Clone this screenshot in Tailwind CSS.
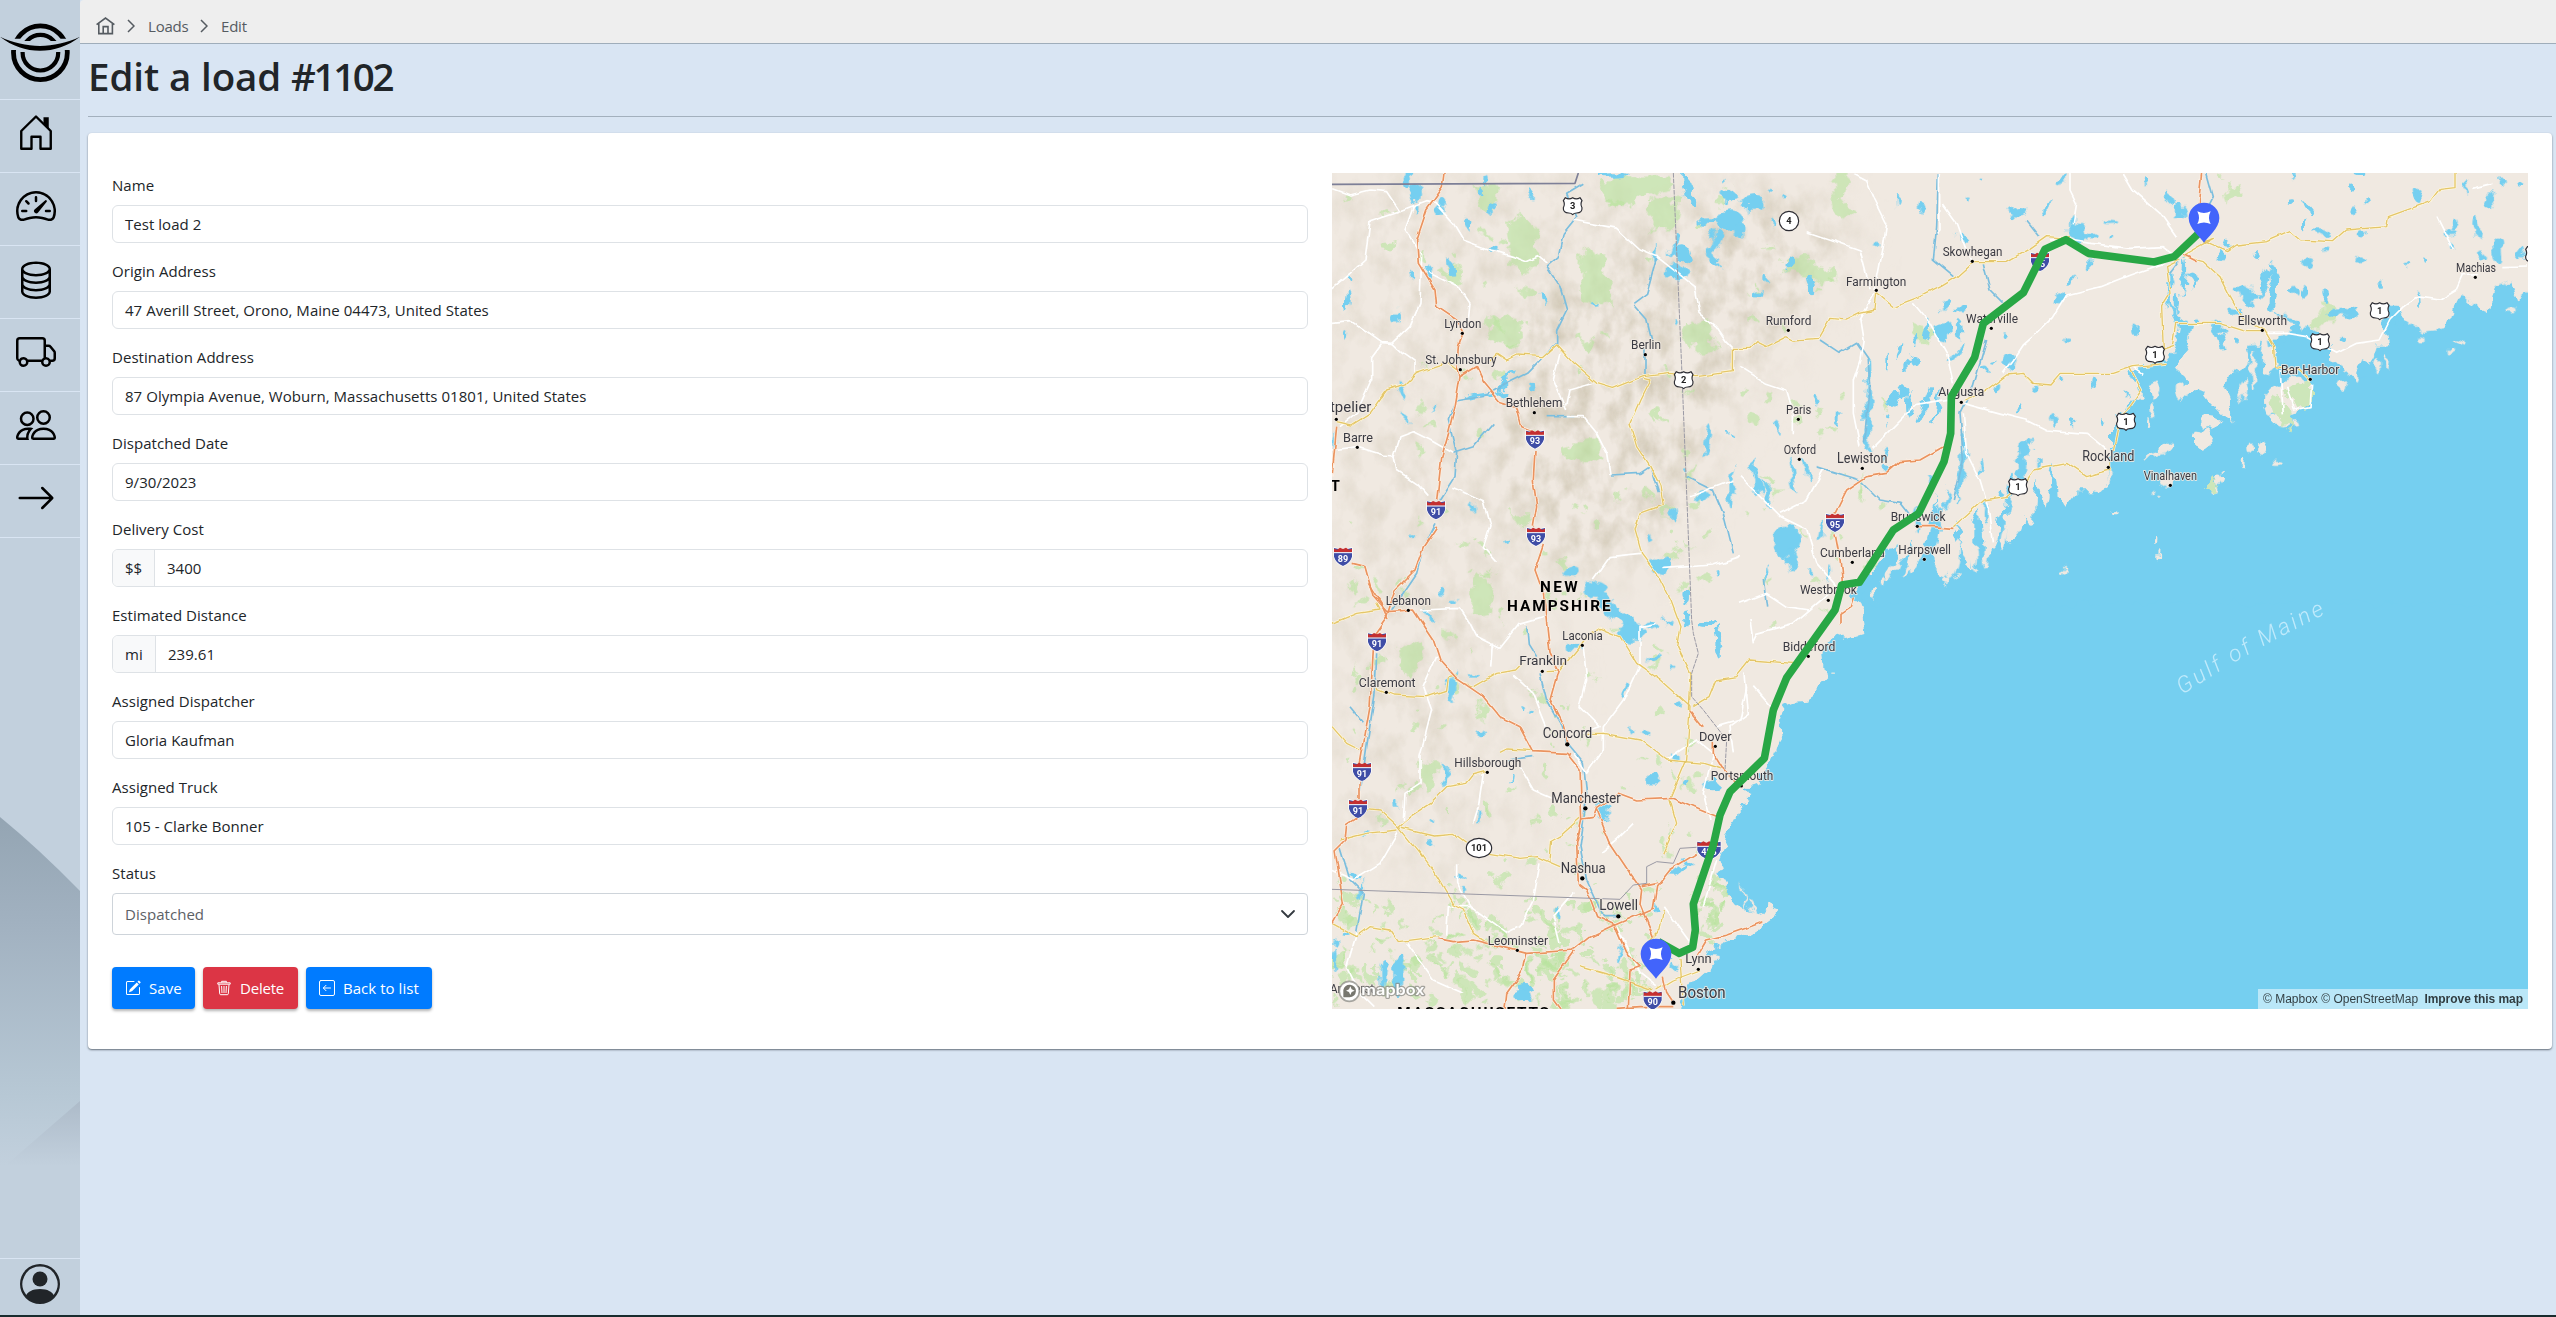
<!DOCTYPE html>
<html lang="en">
<head>
<meta charset="utf-8">
<title>Edit a load #1102</title>
<script src="https://cdn.jsdelivr.net/npm/@tailwindcss/browser@4"></script>
</head>
<body class="flex flex-col w-[2556px] h-[1317px] overflow-hidden bg-[#d9e5f3] font-['Open_Sans','Noto_Sans',sans-serif] text-[#212529]">
<div class="flex flex-1 min-h-0">

<!-- Sidebar -->
<aside class="relative w-20 shrink-0 flex flex-col bg-[#c2d0dd]">
  <svg class="absolute inset-0" width="80" height="1315" viewBox="0 0 80 1315">
    <defs>
      <linearGradient id="m1" x1="0" y1="817" x2="0" y2="1166" gradientUnits="userSpaceOnUse"><stop offset="0" stop-color="#94a5b3"/><stop offset=".3" stop-color="#a1b1c0"/><stop offset=".8" stop-color="#b7c8d5"/><stop offset="1" stop-color="#c2d0dd"/></linearGradient>
      <linearGradient id="m2" x1="0" y1="1101" x2="0" y2="1166" gradientUnits="userSpaceOnUse"><stop offset="0" stop-color="#adbbc9"/><stop offset="1" stop-color="#c2d0dd"/></linearGradient>
    </defs>
    <path d="M0 817Q38 848 80 891V1166H0z" fill="url(#m1)"/>
    <path d="M80 1101L5 1166H80z" fill="url(#m2)"/>
  </svg>
  <div class="relative h-[100px] border-b border-[#d9e5f3]">
    <svg width="80" height="99" viewBox="0 0 80 99" fill="none" stroke="#000">
      <defs>
        <clipPath id="a"><path d="M0 0H80V38.7H0z"/></clipPath><clipPath id="b"><path d="M0 0H80V41H0z"/></clipPath>
        <clipPath id="c"><path d="M0 50H80V99H0z"/></clipPath><clipPath id="d"><path d="M0 52H80V99H0z"/></clipPath>
      </defs>
      <circle cx="40.4" cy="52.7" r="26.8" stroke-width="4.8" clip-path="url(#a)"/>
      <circle cx="40.4" cy="52.7" r="17.8" stroke-width="4.2" clip-path="url(#b)"/>
      <circle cx="40.4" cy="52.7" r="26.9" stroke-width="4.8" clip-path="url(#c)"/>
      <circle cx="40.4" cy="52.7" r="17.8" stroke-width="4.2" clip-path="url(#d)"/>
      <path d="M0 36.8C26 49 54 49 80 36.8C56 55.5 24 55.5 0 36.8z" fill="#000" stroke="none"/>
    </svg>
  </div>
  <nav class="relative flex flex-col">
    <a class="h-[73px] border-b border-[#d9e5f3] pl-4 pt-[13px]"><svg class="size-10" viewBox="0 0 16 16"><path d="M2.1 14.3V7.2L8 1.400l5.900 5.800v7.100H9.800V9.500H6.200v4.800z" fill="none" stroke="#000" stroke-width=".95" stroke-linejoin="round"/><path d="M11 1.700h2.100v5L11 4.600z"/></svg></a>
    <a class="h-[73px] border-b border-[#d9e5f3] pl-4 pt-[12.500px]"><svg class="size-10" viewBox="0 0 16 16"><path d="M8 4a.5.5 0 0 1 .5.5V6a.5.5 0 0 1-1 0V4.5A.5.5 0 0 1 8 4zM3.732 5.732a.5.5 0 0 1 .707 0l.915.914a.5.5 0 1 1-.708.708l-.914-.915a.5.5 0 0 1 0-.707zM2 10a.5.5 0 0 1 .5-.5h1.586a.5.5 0 0 1 0 1H2.5A.5.5 0 0 1 2 10zm9.5 0a.5.5 0 0 1 .5-.5h1.5a.5.5 0 0 1 0 1H12a.5.5 0 0 1-.5-.5zm.754-4.246a.389.389 0 0 0-.527-.02L7.547 9.31a.91.91 0 1 0 1.302 1.258l3.434-4.297a.389.389 0 0 0-.029-.518z"/><path fill-rule="evenodd" d="M0 10a8 8 0 1 1 15.547 2.661c-.442 1.253-1.845 1.602-2.932 1.25C11.309 13.488 9.475 13 8 13c-1.474 0-3.31.488-4.615.911-1.087.352-2.49.003-2.932-1.25A7.988 7.988 0 0 1 0 10zm8-7a7 7 0 0 0-6.603 9.329c.203.575.923.876 1.68.63C4.397 12.533 6.358 12 8 12s3.604.532 4.923.96c.757.245 1.477-.056 1.68-.631A7 7 0 0 0 8 3z"/></svg></a>
    <a class="h-[73px] border-b border-[#d9e5f3] pl-4 pt-[13px]"><svg class="size-10" viewBox="0 0 16 16"><path d="M4.318 2.687C5.234 2.271 6.536 2 8 2s2.766.27 3.682.687C12.644 3.125 13 3.627 13 4c0 .374-.356.875-1.318 1.313C10.766 5.729 9.464 6 8 6s-2.766-.27-3.682-.687C3.356 4.875 3 4.373 3 4c0-.374.356-.875 1.318-1.313ZM13 5.698V7c0 .374-.356.875-1.318 1.313C10.766 8.729 9.464 9 8 9s-2.766-.27-3.682-.687C3.356 7.875 3 7.373 3 7V5.698c.271.202.58.378.904.525C4.978 6.711 6.427 7 8 7s3.022-.289 4.096-.777A4.92 4.92 0 0 0 13 5.698ZM14 4c0-1.007-.875-1.755-1.904-2.223C11.022 1.289 9.573 1 8 1s-3.022.289-4.096.777C2.875 2.245 2 2.993 2 4v9c0 1.007.875 1.755 1.904 2.223C4.978 15.71 6.427 16 8 16s3.022-.289 4.096-.777C13.125 14.755 14 14.007 14 13V4Zm-1 4.698V10c0 .374-.356.875-1.318 1.313C10.766 11.729 9.464 12 8 12s-2.766-.27-3.682-.687C3.356 10.875 3 10.373 3 10V8.698c.271.202.58.378.904.525C4.978 9.71 6.427 10 8 10s3.022-.289 4.096-.777A4.92 4.92 0 0 0 13 8.698Zm0 3V13c0 .374-.356.875-1.318 1.313C10.766 14.729 9.464 15 8 15s-2.766-.27-3.682-.687C3.356 13.875 3 13.373 3 13v-1.302c.271.202.58.378.904.525C4.978 12.71 6.427 13 8 13s3.022-.289 4.096-.777c.324-.147.633-.323.904-.525Z"/></svg></a>
    <a class="h-[73px] border-b border-[#d9e5f3] pl-4 pt-[13px]"><svg class="size-10" viewBox="0 0 16 16"><path d="M0 3.5A1.5 1.5 0 0 1 1.5 2h9A1.5 1.5 0 0 1 12 3.5V5h1.02a1.5 1.5 0 0 1 1.17.563l1.481 1.85a1.5 1.5 0 0 1 .329.938V10.5a1.5 1.5 0 0 1-1.5 1.5H14a2 2 0 1 1-4 0H5a2 2 0 1 1-3.998-.085A1.5 1.5 0 0 1 0 10.5v-7zm1.294 7.456A1.999 1.999 0 0 1 4.732 11h5.536a2.01 2.01 0 0 1 .732-.732V3.5a.5.5 0 0 0-.5-.5h-9a.5.5 0 0 0-.5.5v7a.5.5 0 0 0 .294.456zM12 10a2 2 0 0 1 1.732 1h.768a.5.5 0 0 0 .5-.5V8.35a.5.5 0 0 0-.11-.312l-1.48-1.85A.5.5 0 0 0 13.02 6H12v4zm-9 1a1 1 0 1 0 0 2 1 1 0 0 0 0-2zm9 0a1 1 0 1 0 0 2 1 1 0 0 0 0-2z"/></svg></a>
    <a class="h-[73px] border-b border-[#d9e5f3] pl-4 pt-[12.500px]"><svg class="size-10" viewBox="0 0 16 16"><path d="M15 14s1 0 1-1-1-4-5-4-5 3-5 4 1 1 1 1h8zm-7.978-1A.261.261 0 0 1 7 12.996c.001-.264.167-1.03.76-1.72C8.312 10.629 9.282 10 11 10c1.717 0 2.687.63 3.24 1.276.593.69.758 1.457.76 1.72l-.008.002a.274.274 0 0 1-.014.002H7.022zM11 7a2 2 0 1 0 0-4 2 2 0 0 0 0 4zm3-2a3 3 0 1 1-6 0 3 3 0 0 1 6 0zM6.936 9.28a5.88 5.88 0 0 0-1.23-.247A7.35 7.35 0 0 0 5 9c-4 0-5 3-5 4 0 .667.333 1 1 1h4.216A2.238 2.238 0 0 1 5 13c0-1.01.377-2.042 1.09-2.904.243-.294.526-.569.846-.816zM4.92 10A5.493 5.493 0 0 0 4 13H1c0-.26.164-1.03.76-1.724.545-.636 1.492-1.256 3.16-1.275zM1.5 5.5a3 3 0 1 1 6 0 3 3 0 0 1-6 0zm3-2a2 2 0 1 0 0 4 2 2 0 0 0 0-4z"/></svg></a>
    <a class="h-[73px] border-b border-[#d9e5f3] pl-4 pt-[12.500px]"><svg class="size-10" viewBox="0 0 16 16"><path fill-rule="evenodd" d="M1 8a.5.5 0 0 1 .5-.5h11.793l-3.147-3.146a.5.5 0 0 1 .708-.708l4 4a.5.5 0 0 1 0 .708l-4 4a.5.5 0 0 1-.708-.708L13.293 8.5H1.5A.5.5 0 0 1 1 8z"/></svg></a>
  </nav>
  <div class="relative mt-auto h-[57px] border-t border-[#d9e5f3] pt-[5px] flex justify-center">
    <svg class="size-10" viewBox="0 0 16 16" fill="#212529"><path d="M11 6a3 3 0 1 1-6 0 3 3 0 0 1 6 0z"/><path fill-rule="evenodd" d="M0 8a8 8 0 1 1 16 0A8 8 0 0 1 0 8zm8-7a7 7 0 0 0-5.468 11.37C3.242 11.226 4.805 10 8 10s4.757 1.225 5.468 2.37A7 7 0 0 0 8 1z"/></svg>
  </div>
</aside>

<main class="flex-1 min-w-0 flex flex-col">
  <!-- Breadcrumb -->
  <div class="h-[44px] bg-[#eee] border-b border-[#9fadba] rounded-tl-sm pl-4 pt-[9px] flex items-center text-[15px] tracking-[-0.2px] text-[#555b61]">
    <svg class="w-[19px] h-[18px]" viewBox="0 0 19 18" fill="none" stroke="#555b61" stroke-width="1.6"><path d="M.6 7.6L9.5 1l8.9 6.6M2.8 6.6v10h13.6v-10M7.2 16.5V9.6h4.8v6.9"/></svg>
    <svg class="ml-3 w-2 h-[14px]" viewBox="0 0 8 14" fill="none" stroke="#555b61" stroke-width="1.5"><path d="M1 1l6 6-6 6"/></svg>
    <span class="ml-[13px] w-[52px]">Loads</span>
    <svg class="w-2 h-[14px]" viewBox="0 0 8 14" fill="none" stroke="#555b61" stroke-width="1.5"><path d="M1 1l6 6-6 6"/></svg>
    <span class="ml-[13px]">Edit</span>
  </div>
  <!-- Title -->
  <h1 class="ml-2 h-[73px] border-b border-[#a3b0bd] mr-1 pt-[2px] text-[38.5px] leading-[60px] font-semibold tracking-[-0.1px]">Edit a load <span class="tracking-[-2.4px]">#1102</span></h1>

  <!-- Card -->
  <section class="ml-2 mr-1 mt-4 h-[916px] bg-white rounded px-6 pt-10 flex gap-6 shadow-[0_1px_2px_rgba(50,60,70,.7)]">
    <form class="w-[1196px] text-[15px] tracking-[0.04px]">
      <div id="fields"></div>
      <label class="block h-6 leading-6 mt-4">Status</label>
      <div class="mt-2 h-[42px] border border-[#ced4da] rounded flex items-center justify-between pl-3 pr-[11px] text-[#5c6166]">
        <span>Dispatched</span>
        <svg class="w-4 h-4" viewBox="0 0 16 16" fill="none" stroke="#343a40" stroke-width="1.800" stroke-linecap="round" stroke-linejoin="round"><path d="M2 5l6 6 6-6"/></svg>
      </div>
      <div class="mt-8 flex gap-2 text-white">
        <a class="h-[42px] w-[83px] px-[13px] rounded bg-[#007bff] flex items-center gap-2 shadow-[0_2px_3px_rgba(0,0,0,.3)]"><svg class="size-4 shrink-0" viewBox="0 0 16 16" fill="currentColor"><path d="M15.502 1.94a.5.5 0 0 1 0 .706L14.459 3.69l-2-2L13.502.646a.5.5 0 0 1 .707 0l1.293 1.293zm-1.75 2.456-2-2L4.939 9.21a.5.5 0 0 0-.121.196l-.805 2.414a.25.25 0 0 0 .316.316l2.414-.805a.5.5 0 0 0 .196-.12l6.813-6.814z"/><path fill-rule="evenodd" d="M1 13.5A1.500 1.500 0 0 0 2.500 15h11a1.500 1.500 0 0 0 1.500-1.500v-6a.5.5 0 0 0-1 0v6a.5.5 0 0 1-.5.5h-11a.5.5 0 0 1-.5-.5v-11a.5.5 0 0 1 .5-.5H9a.5.5 0 0 0 0-1H2.500A1.500 1.500 0 0 0 1 2.500v11z"/></svg>Save</a>
        <a class="h-[42px] w-[95px] px-[13px] rounded bg-[#dc3545] flex items-center gap-2 shadow-[0_2px_3px_rgba(0,0,0,.3)]"><svg class="size-4 shrink-0" viewBox="0 0 16 16" fill="none" stroke="currentColor"><path d="M1.800 2.800h12.400v1.400H1.800zM5.600 2.500V1.300h4.800v1.200M3 4.500l.7 9.300q.1.900 1 .9h6.600q.9 0 1-.9L13 4.500M5.600 6l.4 7M8 6v7M10.400 6l-.4 7"/></svg><span class="tracking-[-0.2px]">Delete</span></a>
        <a class="h-[42px] w-[126px] px-[13px] rounded bg-[#007bff] flex items-center gap-2 shadow-[0_2px_3px_rgba(0,0,0,.3)] whitespace-nowrap"><svg class="size-4 shrink-0" viewBox="0 0 16 16" fill="none" stroke="currentColor" stroke-linecap="round" stroke-linejoin="round"><rect x=".5" y=".5" width="15" height="15" rx="1.500"/><path d="M11.500 8h-7M7 5.300L4.300 8 7 10.700"/></svg>Back to list</a>
      </div>
    </form>

    <!-- Map -->
    <div class="relative w-[1196px] h-[836px] overflow-hidden bg-[#f0e9e1]">
      <svg id="map" class="block" width="1196" height="836" viewBox="36 39 3588 2508" fill="none" stroke-linejoin="round">
        <defs>
          <filter id="rough" x="0" y="0" width="3700" height="2600" filterUnits="userSpaceOnUse" color-interpolation-filters="sRGB"><feTurbulence type="fractalNoise" baseFrequency=".022" numOctaves="3" seed="4"/><feDisplacementMap in="SourceGraphic" scale="48" xChannelSelector="R" yChannelSelector="G"/></filter>
          <filter id="park" x="0" y="0" width="3700" height="2600" filterUnits="userSpaceOnUse" color-interpolation-filters="sRGB"><feTurbulence type="fractalNoise" baseFrequency=".018" numOctaves="4" seed="9"/><feDisplacementMap in="SourceGraphic" scale="75" xChannelSelector="R" yChannelSelector="G"/></filter>
          <filter id="wobble" x="0" y="0" width="3700" height="2600" filterUnits="userSpaceOnUse" color-interpolation-filters="sRGB"><feTurbulence type="fractalNoise" baseFrequency=".02" numOctaves="2" seed="2"/><feDisplacementMap in="SourceGraphic" scale="16" xChannelSelector="R" yChannelSelector="G"/></filter>
          <filter id="relief" x="0" y="0" width="3700" height="2600" filterUnits="userSpaceOnUse" color-interpolation-filters="sRGB"><feTurbulence type="fractalNoise" baseFrequency=".016 .011" numOctaves="4" seed="11"/><feColorMatrix values="0 0 0 0 .78  0 0 0 0 .745  0 0 0 0 .66  1.900 0 0 0 -.75"/><feComposite in2="SourceGraphic" operator="in"/></filter>
          <filter id="soft" x="-500" y="-500" width="4500" height="3600" filterUnits="userSpaceOnUse"><feGaussianBlur stdDeviation="70"/></filter>
          <mask id="hills" maskUnits="userSpaceOnUse" x="0" y="0" width="3700" height="2600"><g filter="url(#soft)" fill="#fff"><path d="M560 500L900 300L1150 100L1500 100L1600 300L1300 650L1150 900L1050 1200L700 1250L560 1000z" fill-opacity=".8"/><path d="M36 39H1000V400L600 1200L450 1500L300 2100H36z" fill-opacity=".38"/><path d="M300 1300H760L650 2100L300 2300z" fill-opacity=".25"/></g></mask>
        </defs>
        <rect x="36" y="39" width="3588" height="2508" fill="#f0e9e1"/>
        <g mask="url(#hills)"><rect x="36" y="39" width="3588" height="2508" fill="#fff" filter="url(#relief)"/></g>
        <g id="parks" fill="#b9e3a0" fill-opacity=".62" filter="url(#park)">
          <path d="M840 50L1040 45L1060 85L960 105L940 145L880 140z"/><path d="M1000 108L1070 115L1060 215L985 215z"/>
          <path d="M560 190L600 160L650 220L640 300L605 365L580 300z"/><path d="M790 290L860 280L870 430L780 410z"/>
          <path d="M500 490L560 470L620 510L570 560L520 540z"/><path d="M730 850L830 830L850 900L800 925L740 890z"/>
          <path d="M1100 490L1170 470L1190 560L1100 560z"/><path d="M570 1060H640L630 1095H580z"/>
          <path d="M250 1460L310 1440L320 1500L260 1560L235 1520z"/>
          <path d="M470 1265H520L500 1370L465 1360z"/><path d="M300 1810L350 1800L360 1880L310 1900z"/>
          <path d="M1380 300L1450 290L1480 320L1540 330L1530 380L1460 350L1390 340z"/><path d="M1530 45L1590 40L1560 120L1610 150L1560 190L1540 130z"/>
          <path d="M1775 470L1830 500L1820 560L1790 530z"/><path d="M1625 930L1640 1010L1620 1040z"/>
          <path d="M470 80L525 90L520 150L480 140z"/><path d="M370 340L420 320L420 390L390 370z"/>
          <path d="M2710 70L2760 60L2765 100L2720 140z"/><path d="M2980 500L3010 430L3050 450L3030 500z"/>
        </g>
        <g id="sea" fill="#75cff0" filter="url(#rough)">
          <path transform="translate(1140 1260)" d="M-60 1300L-50 1255L-10 1200L30 1165L60 1125L25 1120L50 1098L110 1075L165 1060L195 1030L230 1005L205 965L180 1000L140 985L110 965L90 940L55 880L80 850L60 830L75 790L80 760L100 730L120 690L145 650L130 625L175 610L185 580L200 555L225 520L240 470L235 430L250 380L285 365L325 362L340 320L378 280L370 230L375 195L400 165L440 180L490 165L485 110L470 70L450 50L480 20L500 -30H2600V1400H-60z"/>
          <path transform="translate(1260)" d="M360 1330L380 1270L400 1225L450 1170L480 1160L465 1215L500 1180L520 1140L495 1260L540 1200L560 1130L590 1010L600 1100L590 1170L600 1250L620 1270L650 1200L640 1120L650 1090L665 1180L690 1240L700 1150L700 1080L720 1040L725 1120L740 1200L760 1150L770 1100L790 1050L830 960L800 1060L800 1140L830 1130L850 1060L880 1080L890 950L900 1000L920 1040L940 900L950 1000L980 1040L1010 1000L1060 1000L1100 970L1110 920L1120 850L1150 810L1170 760L1200 720L1205 680L1170 630L1210 610L1280 600V1330z"/>
          <path transform="translate(2430)" d="M-60 800L30 700L0 630L50 615L110 600L138 560L150 500L118 440V330L128 330L125 430L165 490L182 500L165 560L130 640L165 655L150 720L200 690L250 720L325 800L270 700L300 640L360 610L345 560L400 556L395 640L440 620L430 540L470 520L530 500L560 520L600 560L600 600L680 660L700 600L720 620L740 560L770 560L760 490L800 460L840 490L880 520L950 510L970 430L1000 400L1030 430L1070 460L1090 380L1140 360L1160 430L1194 400H1300V1330H-60z"/>
          <g id="lakes"></g>
        </g>
        <g id="islands" fill="#f0e9e1" filter="url(#rough)"></g>
        <g fill="#cde6ba" filter="url(#park)"><path d="M2900 690L2970 665V745L2930 750z"/><path d="M2850 720L2880 710L2905 800L2860 770z"/><path d="M2690 950L2700 960L2690 1000L2670 995z"/></g>
        <g id="roads" filter="url(#wobble)"></g>
        <path d="M36 73L765 70L775 39" stroke="#7d7f97" stroke-width="5"/>
        <path d="M1060 39L1085 620L1115 1380L1120 1420L1135 1480L1115 1540L1115 1610L1150 1650L1220 1740L1215 1830" stroke="#9a99a4" stroke-width="3" stroke-dasharray="14 3"/>
        <path d="M36 2188L900 2218L940 2175L980 2170L980 2120L1010 2105L1060 2110L1080 2065L1160 2060" stroke="#9a99a4" stroke-width="3"/>
        <g id="shields"></g>
        <g id="labels" font-family="Roboto, 'Noto Sans', sans-serif" fill="#3a3a42"></g>
        <g font-family="Roboto, sans-serif" font-weight="700" fill="#000" stroke="#f0e9e1" stroke-width="5" paint-order="stroke" letter-spacing="5"><text x="660" y="1296" font-size="46" textLength="118">NEW</text><text x="561" y="1352" font-size="46" textLength="316">HAMPSHIRE</text><text x="232" y="2573" font-size="46" textLength="460">MASSACHUSETTS</text><text x="32" y="992" font-size="44">T</text></g>
        <path id="gulf" d="M2588 1604Q2790 1470 3050 1346"/>
        <text font-family="Roboto, sans-serif" font-style="italic" font-weight="300" font-size="68" fill="#c0eafb"><textPath href="#gulf" textLength="492">Gulf of Maine</textPath></text>
        <g transform="translate(1260)">
          <path d="M1392 205L1302 290L1242 306L1045 280L978 239L915 268L850 398L730 490L704 592L634 710L632 820L612 905L536 1060L460 1110L358 1267L305 1275L285 1350L140 1553L100 1650L73 1795L-30 1895L-60 1965L-80 2055L-140 2232L-134 2310L-142 2362L-182 2380L-245 2345" stroke="#28a745" stroke-width="23"/>
        </g>
        <g id="pins"></g>
        <g stroke="#8b8b86" stroke-opacity=".75"><circle cx="88" cy="2494" r="30" fill="#fff" stroke-width="5"/><path d="M70 2512V2490A19 19 0 1 1 89 2512z" fill="#77776f" stroke="none"/><path d="M91 2479l4 9 9 4-9 4-4 9-4-9-9-4 9-4z" fill="#fff" stroke="none"/><text x="124" y="2506" font-family="Inter, Roboto, sans-serif" font-weight="600" font-size="44" fill="#fff" stroke-width="7" paint-order="stroke" textLength="190" lengthAdjust="spacingAndGlyphs">mapbox</text></g>
      </svg>
      <div class="absolute right-0 bottom-0 h-5 w-[270px] px-[5px] bg-white/50 flex items-center justify-between font-['Liberation_Sans',sans-serif] text-[12px] text-black/75 whitespace-nowrap"><span>© Mapbox © OpenStreetMap</span><b class="tracking-[-0.05px]">Improve this map</b></div>
    </div>
  </section>
</main>
</div>
<footer class="h-[2px] bg-[#182c2e]"></footer>

<script>
// Form fields: label, value, optional prefix and prefix width
const fields = [
  ['Name','Test load 2'],['Origin Address','47 Averill Street, Orono, Maine 04473, United States'],
  ['Destination Address','87 Olympia Avenue, Woburn, Massachusetts 01801, United States'],['Dispatched Date','9/30/2023'],
  ['Delivery Cost','3400','$$',43],['Estimated Distance','239.61','mi',44],
  ['Assigned Dispatcher','Gloria Kaufman'],['Assigned Truck','105 - Clarke Bonner']];
document.getElementById('fields').innerHTML = fields.map(([l,v,p,w],i)=>
 `<label class="block h-6 leading-6 ${i?'mt-4':''}">${l}</label><div class="mt-2 h-[38px] border border-[#dee2e6] rounded-md flex items-center overflow-hidden">${p?`<span class="h-full flex items-center pl-3 bg-[#f8f9fa] border-r border-[#dee2e6]" style="width:${w-1}px">${p}</span>`:''}<span class="pl-3">${v}</span></div>`).join('');

const $=id=>document.getElementById(id), set=(id,h)=>$(id).innerHTML=h;

// Lakes and islands: x, y, rx, ry, rotation
const blob=([x,y,a,b,r=0])=>`<ellipse cx="${x}" cy="${y}" rx="${a}" ry="${b}" transform="rotate(${r} ${x} ${y})"/>`;
const lakes=[
[262,55,14,22],[285,100,18,36],[295,155,6,18],[360,140,9,20,-20],[437,190,14,24],[495,58,8,14],[520,140,10,22,30],[630,100,8,20,-30],[395,320,9,32,-20],[330,332,8,20,-30],[520,268,10,8],[277,346,6,8],[85,420,7,24],[225,472,9,12],[665,412,8,16],[95,350,5,10],[80,518,5,8],[250,695,8,22,-30],[340,745,5,9],[255,768,5,16,-15],[480,95,6,14],[640,685,12,8],
[1105,90,12,55,-15],[1225,110,28,20,30],[1230,175,40,30,10],[1165,180,30,8],[1185,240,12,45,25],[1180,290,28,12,30],[880,45,40,8],[1085,280,24,24],[1070,335,30,22,20],[1060,260,9,40,20],[1195,315,18,6,40],[1005,280,6,20,20],[1160,840,11,45,10],[1230,825,8,8],[1150,1010,18,14,-10],[1235,985,10,60],[1060,1055,8,20],[1070,485,6,10],[1105,930,5,12],[1018,1215,30,24],[985,1140,8,18],[755,1235,24,20],[565,1142,6,8],[1190,1245,6,10],[280,1122,16,5,-30],[455,1040,6,12,-30],[830,430,12,4],[560,660,8,40,40],[480,708,50,6,-10],[540,698,24,8,-20],[45,840,5,25],
[830,1290,30,24],[870,1345,50,26,40],[930,1400,55,24,45],[990,1390,25,12],[760,1460,20,16],[930,1420,36,22],[370,1300,6,14],[400,1325,8,6],[330,1370,6,28,-40],[395,1590,14,45],[408,1545,6,10],[460,1548,14,5],[375,1840,7,32],[575,1850,5,14,15],[1100,1310,10,14],[1100,1370,8,26],[1160,1390,20,8],[1195,1445,7,45,-10],[1000,1495,20,10,-20],[1045,1390,16,8,30],[1055,1525,8,6],[980,1713,14,9],[1075,1640,8,8],[935,1705,8,8],[1060,1785,10,12],[915,1595,7,18,25],[635,1655,8,6],[490,1715,8,8],[610,1645,5,10],[1000,1860,12,14],[1185,1875,28,16],[850,1955,14,20],[855,1940,20,10],[340,1980,5,12],[475,1965,5,18],[225,1935,5,12],[135,2022,10,8],[430,2200,8,14],[330,2045,8,8],[710,2260,6,18],[235,2440,16,65],[190,2440,10,40],[605,2510,28,20],[620,2485,20,10],[425,2145,10,8],[900,2380,6,25,15],[1070,2130,30,10,-20],[1100,2110,20,8,30],[1010,2240,8,18],[1060,2410,8,10],[55,2350,6,20],[45,2400,5,30],[75,2320,12,5],[100,2145,20,6,10],[125,2190,6,30],[1095,1870,10,6],
[1300,130,40,16],[1265,210,20,14,40],[1210,60,4,4],[1345,95,8,6],[1395,110,5,8],[1475,370,10,26,-25],[1410,310,14,10,-30],[1360,185,6,14,-20],[1668,260,10,9],[1735,125,5,15],[1805,140,10,25,-20],[1922,235,9,20,-15],[1945,120,5,8],[1975,60,5,5],[2095,155,32,11,-5],[2180,145,7,24,30],[2230,55,22,7,-25],[2275,215,30,24],[2310,225,14,10],[2265,185,6,22],[2370,190,22,5],[2375,240,10,6],[2218,415,13,22,20],[2255,355,7,14,20],[2240,540,10,7],[2445,505,10,18,20],[2475,65,7,10],[2310,310,10,6],[1315,405,10,10],[1335,360,5,15],[1872,435,15,20],[1915,445,14,10],[1870,515,22,32],[1920,510,10,30],[1910,580,7,35,40],[1740,570,6,30,15],[1790,540,7,25,-15],[1820,510,6,35,10],[1780,600,8,20],[1700,600,4,25],[1720,715,20,28],[1750,695,14,20],[1830,700,7,30,20],[1800,760,8,40,20],[1850,740,6,60,15],[1770,730,6,40],[1700,780,5,8],[1760,620,6,20,40],[2070,605,18,22,40],[2030,685,9,18,20],[1995,630,12,7,-10],[2150,688,12,14,30],[2215,660,10,9],[2015,600,8,5],[2100,745,12,5,-40],[2320,670,6,14],[2260,790,5,14,30],[2415,710,5,12,-40],[2060,520,6,12],[2345,785,5,14,20],[2385,780,5,15],[2200,780,10,18],
[1400,1140,42,46],[1420,1205,14,35],[1310,960,8,45,-15],[1340,1000,8,50,-20],[1295,920,6,40],[1420,940,6,60,-10],[1460,930,6,45,-20],[1380,800,6,20,-30],[1550,770,6,18],[1485,720,8,14,-30],[1640,800,10,55],[1645,730,7,50],[1645,640,6,50],[1640,850,10,20],[1695,880,7,20,15],[1700,920,6,16],[1500,1115,6,30,15],[1530,1235,5,25],[1470,1240,5,14],[1330,1240,6,30],[1930,880,8,60],[1920,970,9,50,10],[1880,1020,6,40,10],[1860,1060,5,35],[1980,920,5,20],[2110,870,14,24],[2100,920,10,40],[2070,1000,8,60,10],[2130,850,10,10],[2160,910,5,16],[2040,1010,10,15],[2000,1060,6,30],[1840,970,7,30],[1790,1080,6,40],
[2550,115,10,26,-30],[2580,155,16,22],[2480,65,6,9],[2925,45,8,6],[3095,80,9,14,-30],[3120,42,16,6],[2910,125,12,7],[2965,140,8,20,-40],[3005,215,20,9,20],[2955,190,6,20],[3105,160,14,14],[3125,215,12,14],[3135,122,5,10],[2720,245,15,9,40],[2700,290,8,20,20],[2805,280,8,8],[3120,292,14,10,30],[3015,270,8,8],[2965,308,15,14],[3290,100,9,25,-20],[3435,82,5,15],[3500,130,18,18],[3510,110,12,10],[3470,205,12,32,-10],[3400,190,10,22],[3400,260,8,10],[3480,285,22,10,40],[3530,270,12,38,-10],[3545,65,10,8],[3600,75,12,8],[3600,280,10,20,20],[3390,220,20,8],[2835,370,12,50,15],[2860,340,8,35,-10],[2860,400,14,60,10],[2780,400,38,12,20],[2790,425,26,10,30],[2920,390,10,12],[2950,395,16,20],[3015,405,8,14],[2615,345,22,9,30],[2620,370,8,14],[2575,430,8,25],[2740,450,22,14,20],[2700,530,8,45,-30],[2690,500,30,8,30],[2630,480,10,8],[3080,450,30,10],[3090,470,14,14],[3070,540,8,14],[3040,460,20,20],[3180,368,12,6],[3305,300,5,8],[3260,310,8,5],[2590,350,6,60],[2550,400,6,50,10],[2930,500,18,20],[2900,470,40,7,15],[2860,550,40,14],[3220,450,22,20],[3290,430,6,26],[3240,480,12,30],[2750,540,10,10],[3120,650,6,6]
];
set('lakes',lakes.map(blob).join(''));
const isl=[[2640,640,44,60,30],[2690,690,60,26,50],[2730,600,50,40],[2640,560,36,50],[2670,790,28,22],[2650,840,26,30],[2700,740,50,12,45],[2510,690,14,26,10],[2495,750,10,24],[2578,690,14,20],[2770,690,12,30],[2800,630,8,50],[2840,580,14,60],[2895,720,56,46,30],[2930,700,50,50],[2880,780,28,22],[2850,730,18,40],[2535,865,30,14,-25],[2500,890,18,6,-20],[2540,960,26,26],[2830,872,16,24],[2795,865,7,12],[2768,912,6,10],[2868,912,14,6],[2695,955,10,18,20],[2680,990,12,12],[2930,790,10,10],[3070,680,12,22],[3110,640,8,22],[3170,620,7,26],[3200,600,6,24],[3385,580,8,12],[3575,450,12,8],[3300,540,14,10],[3415,550,14,4,20],[2510,1150,5,10],[2512,1180,3,6],[2380,1055,10,5],[2370,960,8,14,20],[2500,1000,6,4],[2050,1130,10,40,10],[2000,1180,10,45],[1960,1190,8,45],[1900,1200,18,60,8],[1870,1215,18,40],[2090,1080,24,50,15],[2130,1060,14,40],[2025,1100,9,50],[1790,1210,14,45,20],[1760,1230,8,30,25],[1720,1230,8,30,30],[1692,1260,7,16,20],[1660,1300,9,12],[1880,1265,14,10],[1538,1532,5,4],[2500,690,10,16],[2480,790,5,12],[2230,1238,4,8],[2415,740,12,30],[1270,2210,3,40,-15],[1300,2240,5,24,-30]];
set('islands',isl.map(blob).join(''));

// Scattered woodland, denser towards the southwest
let s=7;const rnd=()=>(s=(s*16807)%2147483647)/2147483647;
let g='';
for(let i=0;i<170;i++)g+=blob([40+rnd()*960,2215+rnd()*320,4+rnd()*26,4+rnd()*16,rnd()*90]);
for(let i=0;i<110;i++)g+=blob([60+rnd()*1150,1000+rnd()*1200,4+rnd()*13,4+rnd()*14,rnd()*90]);
for(let i=0;i<45;i++)g+=blob([60+rnd()*1500,60+rnd()*900,4+rnd()*16,4+rnd()*14,rnd()*90]);
for(let i=0;i<30;i++)g+=blob([1280+rnd()*500,650+rnd()*750,3+rnd()*9,3+rnd()*14,rnd()*90]);
for(let i=0;i<25;i++)g+=blob([1130+rnd()*80,2130+rnd()*220,4+rnd()*12,4+rnd()*14,0]);
$('parks').innerHTML+=g;

// Road network, grouped by class
const white=['36 85 90 105 150 90 200 95 240 155 150 185 135 300 90 340 36 385','240 155 320 125 345 130 400 190 430 240 510 270 580 290 620 305 655 290 680 310','280 140 255 210 305 290 300 430 270 500 218 550 185 548 95 485 36 490','218 550 250 580 285 605 285 640','185 550 155 590 155 660 110 760 60 800','760 180 890 205 960 270 1010 290 1125 380 1140 460 1190 500 1220 545 1240 565','330 340 420 385 450 430 445 480','36 870 110 860 190 885 222 888 240 830 280 815 330 840 400 880','222 888 230 930 290 970 325 1010','400 985 490 1025 510 1100 490 1160 530 1205','720 580 700 660 740 750','740 770 790 770 830 820 860 880 870 945','740 740 750 690 820 670','1110 1010 1240 960','820 1260 870 1190 960 1180','1030 1225 1180 1215 1260 1190','300 1350 420 1345 450 1390 470 1430 540 1465 600 1390 670 1370','520 1450 515 1520','580 1545 640 1600 680 1700','790 1460 800 1560 780 1640 840 1700 780 1720','350 1490 310 1580 335 1650 300 1790 300 1870 255 1900 250 1980','490 1840 475 1940 460 1990','600 1820 640 1890 720 1925','760 1780 800 1840 850 1770 850 1700 910 1620 960 1510 960 1400 1010 1390','235 2015 180 2110 100 2160 36 2130','660 2110 640 2220 600 2300 560 2320 450 2240 410 2170 410 2110','380 2330 385 2240 450 2240','720 2350 700 2270 760 2200','840 2080 890 2040 940 1990','110 2320 80 2420 120 2500 160 2540','260 2350 340 2460 430 2500','890 2300 960 2440 1010 2480','1030 2240 1110 2350','1190 2100 1150 2240','1040 1800 1130 1740 1180 1780 1150 1900 1170 1980','1260 1330 1340 1300 1400 1340 1470 1350','1290 1380 1300 1450','1600 39 1640 60 1665 120 1700 190 1690 260 1665 390','1460 215 1550 245 1620 270 1650 385','1858 39 1860 210 1850 220','1870 135 1910 190 1935 260 1955 300','2250 39 2250 90 2270 130 2260 190','2410 39 2440 90 2520 160 2570 230','2190 240 2250 240 2310 250 2430 265 2530 260 2570 290','2240 405 2340 380 2430 345 2530 310','2240 405 2200 470 2150 520 2110 555 2080 600 2050 640','1780 430 1830 490 1880 580 1900 670','1665 400 1620 480 1630 540 1620 600 1600 660 1600 760 1620 860','1260 620 1340 670 1400 690 1420 760 1420 820','1260 950 1320 1010 1380 1070 1460 1110 1490 1210 1560 1290','1380 1060 1460 1020 1510 930','1660 860 1740 780 1790 730 1880 715','1930 730 2040 760 2120 780 2180 810 2300 820 2360 870','1930 760 1940 880 1980 960 2010 1060 2020 1150','2440 620 2470 640','2840 520 2900 520 2960 530 3050 580 3110 550 3180 540 3210 480 3250 440 3290 410 3360 420 3410 390 3430 345 3470 340','3550 320 3624 318','3460 85 3520 70','3350 170 3380 230 3400 270','2880 630 2890 760','2900 680 2920 750 2970 740 2975 670','1300 1440 1310 1420 1420 1390 1540 1290','1275 1540 1285 1660 1230 1700 1240 1780','1190 1700 1260 1680 1280 1580','1300 1580 1370 1660'];
const yellow=['50 785 95 795 150 760 200 690 260 670 290 640 380 610','380 610 420 640','510 600 530 580 560 600 590 585 670 590 710 555 760 610 830 670 880 685 970 650 1050 640 1130 650 1240 635 1240 565 1290 565 1310 545 1340 560 1400 530','970 655 990 660 960 720 930 790 950 860 990 920 1020 980 1030 1035 960 1060 945 1110 965 1180 1010 1240 1050 1320 1080 1400 1070 1460 1110 1540 1105 1650','36 1390 110 1360 180 1350 170 1330','170 1585 220 1605 320 1610 380 1590 385 1550 410 1545','36 1700 80 1750 120 1770','410 1560 460 1580 530 1540 590 1530 610 1510','680 1532 720 1530 770 1470 800 1430 840 1405 900 1430 950 1510 1020 1560 1110 1640','800 1720 850 1720 960 1740 1040 1800 1150 1810 1215 1830','500 1835 460 1845 440 1870 380 1880 330 1930 270 1970 235 2000','130 1945 180 1950 235 2000 340 2025 400 2020 440 2050','235 2000 300 2080 350 2150 400 2235 430 2250 460 2320 520 2360','60 2040 140 2020 235 2010','510 2080 600 2095 650 2090 720 2120','690 2105 695 2040 730 2020 780 1975','36 2290 110 2330 150 2300 210 2310 235 2345 350 2330','540 1780 560 1770 640 1775','1110 1640 1100 1800 1050 1920 1070 1990 1030 2080','1030 2250 1020 2310 990 2340','780 2420 870 2445 1000 2490','1080 2400 1090 2540','1010 2490 1060 2460 1140 2430','1120 1640 1170 1610 1190 1560 1250 1550 1290 1500 1420 1510','1400 530 1420 540 1495 535 1530 475 1580 480 1620 460 1665 450 1670 400 1720 440 1800 410 1860 380 1910 350 1960 305 2060 305 2130 265 2180 230 2250 235','1930 720 2000 690 2060 645 2110 640 2140 670 2190 675 2220 640 2310 640 2380 640 2440 620 2540 610','2430 625 2465 690 2430 740 2400 770 2380 870','2370 910 2370 930 2300 950 2240 910 2140 930 2110 970 2060 1010 1990 1020 1900 1100','2590 285 2680 235 2650 245 2720 275 2750 255 2840 245 2910 215 2940 240 3040 245 3080 210 3200 200 3205 170 3330 125 3360 85 3405 80 3405 39','2590 290 2650 305 2700 350 2730 410 2770 480 2830 510 2860 560 2865 620 2940 630 2970 660','2580 300 2540 320 2550 400 2525 440 2530 570 2560 560 2570 490 2640 490 2700 490 2780 515 2830 515'];
const orange=['375 39 370 80 320 150 290 240 295 310 345 390 350 440 410 480 430 520 415 560 410 620 420 650 405 740 385 820 365 890 350 1020','420 650 470 620 490 665 540 725 590 740 605 800 645 815','645 870 640 960 650 1040 640 1100','670 1155 645 1230 670 1300 690 1480 715 1530 690 1620 730 1700 745 1755','350 1100 310 1160 285 1230 225 1290 200 1370 165 1420','36 950 50 800','95 1210 135 1220 160 1310 200 1355 280 1350 340 1440 360 1500 410 1555 490 1610 540 1670 600 1700 640 1775 740 1780 780 1830 785 1980 770 2050 775 2170 800 2190 830 2270 885 2295','145 1270 185 1335 205 1380','160 1470 150 1640 120 1810','120 1865 120 1920','110 1970 80 1990 75 2040 45 2070 70 2230 36 2290','350 2335 400 2345 460 2340 540 2360 620 2380 760 2370 810 2330 885 2295 1000 2245 1010 2180 1050 2130 1130 2080','620 2380 610 2430 560 2500 555 2547','760 2375 700 2460 700 2520 720 2547','885 2300 920 2380 960 2420 930 2430 925 2547','750 1780 745 1785','785 1980 820 1975 830 1945 895 1900 950 1920 1060 1915 1140 1950 1190 1970','830 1950 870 2050 930 2140 965 2190 960 2230 1000 2330','965 2180 1010 2170','1110 1650 1150 1700','1180 1745 1180 1780 1210 1830 1250 1870','1130 2390 1160 2340 1220 2325 1290 2300 1330 2285','890 2545 960 2540 1060 2540','1030 2450 1040 2500 1060 2530','1545 1060 1580 990 1640 950 1700 940 1740 905 1800 900 1870 860','1545 1120 1560 1200 1570 1290','1600 1310 1590 1340 1560 1360 1560 1390','1790 1100 1840 1100 1900 1105','2645 39 2635 130','2590 285 2630 305'];
const rivers=['790 70 740 100 770 170 730 220 715 290 680 320 720 380 740 450 710 510 710 550 670 590 620 640 560 670 500 705 410 720 385 780 410 880 405 950 360 1020','345 1090 310 1160 290 1240 215 1350','170 1480 165 1600 140 1760 120 1900','60 2060 90 2160 130 2200 110 2320','660 1540 680 1620 720 1690 740 1750 790 1810 800 1900 790 1990 780 2060 800 2160 850 2270 900 2270','940 435 980 480 995 540','1010 290 980 400 940 430','975 560 975 650','680 770 760 770','400 880 460 860 520 790','870 945 960 940 990 920 1015 1000','620 1395 625 1450 650 1490','1100 950 1180 990 1210 1060 1240 1180','1855 39 1850 200 1840 300 1900 350','1990 310 2010 390 2050 430','2000 540 1960 680 1920 760 1930 900 1900 1020','1500 540 1560 580 1610 550 1645 600 1650 700 1630 850','1490 920 1620 960 1680 1020 1740 1030 1780 1080','1330 1260 1340 1340','2660 39 2680 110 2660 150','2580 300 2550 340','2120 180 2160 230','640 1790 560 1800','90 1640 130 1690'];
const pl=(a,c,w)=>a.map(p=>`<polyline points="${p}" stroke="${c}" stroke-width="${w}"/>`).join('');
set('roads',pl(rivers,'#7bbede',5)+pl(white,'#fff',5)+pl(yellow,'#fff8df',8)+pl(yellow,'#e4c669',4)+pl(orange,'#fff2e6',9)+pl(orange,'#ea935f',5));

// Town labels: text, x, baseline, width, font size, dot x, dot y, city dot
const towns=[['Lyndon',373,503,111,38,427,520],['St. Johnsbury',316,613,214,38,421,629],['tpelier',30,755,124,44,49,778],['Barre',69,847,90,38,112,862],['Bethlehem',557,742,170,38,643,758],['Berlin',933,568,90,38,976,584],
['Lebanon',197,1334,136,38,265,1351],['Laconia',727,1441,121,38,787,1456],['Franklin',598,1515,143,38,667,1534],['Claremont',116,1580,171,38,199,1597],['Concord',668,1735,149,44,742,1753,1],['Dover',1137,1743,98,40,1186,1759],['Hillsborough',403,1821,201,38,502,1837],['Manchester',694,1928,208,44,796,1945,1],['Portsmouth',1172,1860,188,38,1264,1878],['Nashua',722,2138,135,43,787,2155,1],['Lowell',838,2251,116,43,895,2269,1],['Leominster',503,2356,181,38,592,2371],['Lynn',1096,2410,79,38,1135,2428],['Boston',1074,2515,143,48,1060,2528,1],['Amherst',30,2498,132,38],
['Westbrook',1440,1303,170,38,1525,1321],['Biddeford',1388,1473,158,38,1465,1489],
['Skowhegan',1868,288,179,38,1957,304],['Farmington',1578,377,181,38,1669,391],['Rumford',1337,495,137,38,1405,511],['Waterville',1938,489,156,38,2014,505],['Augusta',1855,707,138,40,1924,727],['Paris',1398,763,76,38,1435,778],['Oxford',1391,882,97,38,1438,898],['Lewiston',1551,908,151,42,1627,925],['Brunswick',1712,1083,165,38,1792,1099],['Harpswell',1735,1182,158,38,1813,1198],['Cumberland',1500,1192,194,38,1597,1207],['Rockland',2287,903,156,42,2365,922],
['Machias',3408,336,120,38,3466,352],['Ellsworth',2753,495,148,38,2827,511],['Bar Harbor',2883,642,175,38,2971,658],['Vinalhaven',2471,961,160,38,2551,976]];
set('labels',towns.map(([t,x,y,w,f,dx,dy,big])=>
 (dx?`<circle cx="${dx}" cy="${dy}" r="${big?6.5:4.8}" fill="#000" stroke="#f0e9e1" stroke-width="3" paint-order="stroke"/>`:'')+`<text x="${x}" y="${y}" font-size="${f}" textLength="${w}" lengthAdjust="spacingAndGlyphs" stroke="#f0e9e1" stroke-width="6" stroke-opacity=".85" paint-order="stroke">${t}</text>`).join(''));

// Highway shields
const inter=(x,y,n,w=27)=>`<g transform="translate(${x} ${y})"><path d="M${-w} -26Q0 -18 ${w} -26V0Q${w-6} 20 0 28Q${6-w} 20 ${-w} 0z" fill="#3f4da6" stroke="#fff" stroke-width="4" paint-order="stroke"/><path d="M${-w} -13V-24l9 3 9-6 9 4 9-4 9 6 ${w-18} -3V-13z" fill="#c42f30"/><path d="M${-w} -12H${w}" stroke="#fff" stroke-width="3"/><text y="15" text-anchor="middle" font-size="27">${n}</text></g>`;
const us=(x,y,n)=>`<g transform="translate(${x} ${y})"><path d="M-22 -24Q-11 -17 0 -24Q11 -17 22 -24L28 -15Q22 -5 28 6Q29 22 12 22Q4 22 0 27Q-4 22 -12 22Q-29 22 -28 6Q-22 -5 -28 -15z" fill="#fff" stroke="#2c2c33" stroke-width="3.500"/><text y="10" text-anchor="middle" font-size="28" fill="#222">${n}</text></g>`;
set('shields','<g font-family="Roboto, sans-serif" font-weight="700" fill="#fff">'+
 [[645,838,93],[648,1130,93],[348,1050,91],[69,1190,89],[171,1446,91],[126,1835,91],[114,1946,91],[1545,1088,95],[2160,305,95],[998,2521,90]].map(a=>inter(...a)).join('')+inter(1167,2071,495,35)+
 [[758,137,3],[1091,659,2],[2505,583,1],[2418,784,1],[2094,980,1],[3000,545,1],[3179,452,1],[3645,283,1]].map(a=>us(...a)).join('')+
 '<circle cx="1407" cy="183" r="29" fill="#fff" stroke="#2c2c33" stroke-width="3.500"/><text x="1407" y="193" text-anchor="middle" font-size="28" fill="#222">4</text><ellipse cx="477" cy="2064" rx="38" ry="29" fill="#fff" stroke="#2c2c33" stroke-width="3.500"/><text x="477" y="2074" text-anchor="middle" font-size="28" fill="#222">101</text></g>');

// Origin and destination pins
set('pins',[[2652,174],[1008,2382]].map(([x,y])=>`<g transform="translate(${x} ${y})"><path d="M0 74C-10 58 -46 32 -46 0A46 46 0 0 1 46 0C46 32 10 58 0 74z" fill="#4264fb"/><path d="M-20 -20Q0 -10 20 -20Q10 0 20 18Q0 9 -20 18Q-10 0 -20 -20z" fill="#fff"/></g>`).join(''));
</script>
</body>
</html>
